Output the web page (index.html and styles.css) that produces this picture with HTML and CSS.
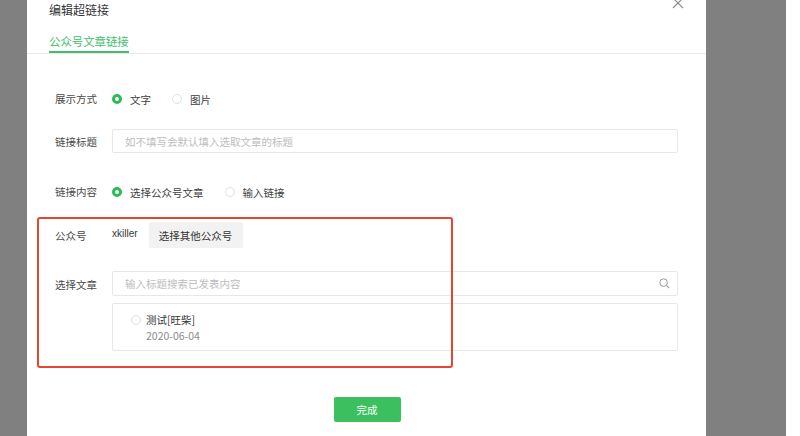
FILE: index.html
```html
<!DOCTYPE html>
<html lang="zh-CN">
<head>
<meta charset="utf-8">
<title>编辑超链接</title>
<link rel="stylesheet" href="styles.css">
</head>
<body>
<div class="screen">
  <div class="mask mask-left"></div>
  <div class="dialog">
    <button class="close" aria-label="关闭">
      <svg width="12" height="12" viewBox="0 0 12 12"><path d="M1 1L11 11M11 1L1 11" stroke="#8a8a8a" stroke-width="1.1" fill="none"/></svg>
    </button>
    <div class="dialog-title">编辑超链接</div>
    <div class="tabs">
      <span class="tab active">公众号文章链接</span>
    </div>
    <div class="form">
      <div class="row row-mode">
        <div class="label">展示方式</div>
        <div class="control radios">
          <label class="radio checked"><i></i>文字</label>
          <label class="radio"><i></i>图片</label>
        </div>
      </div>
      <div class="row row-title">
        <div class="label">链接标题</div>
        <div class="control">
          <div class="input"><span class="placeholder">如不填写会默认填入选取文章的标题</span></div>
        </div>
      </div>
      <div class="row row-content">
        <div class="label">链接内容</div>
        <div class="control radios">
          <label class="radio checked"><i></i>选择公众号文章</label>
          <label class="radio"><i></i>输入链接</label>
        </div>
      </div>
      <div class="row row-account">
        <div class="label">公众号</div>
        <div class="control account">
          <span class="nickname">xkiller</span>
          <button class="btn-default">选择其他公众号</button>
        </div>
      </div>
      <div class="row row-article">
        <div class="label">选择文章</div>
        <div class="control">
          <div class="input search">
            <span class="placeholder">输入标题搜索已发表内容</span>
            <svg class="search-icon" width="11" height="11" viewBox="0 0 11 11"><circle cx="4.6" cy="4.6" r="3.8" stroke="#9a9a9a" stroke-width="1" fill="none"/><path d="M7.4 7.4L10.2 10.2" stroke="#9a9a9a" stroke-width="1.1"/></svg>
          </div>
          <div class="article-list">
            <label class="article">
              <i class="radio-dot"></i>
              <span class="article-info">
                <span class="article-title">测试[旺柴]</span>
                <span class="article-date">2020-06-04</span>
              </span>
            </label>
          </div>
        </div>
      </div>
      <div class="footer">
        <button class="btn-primary">完成</button>
      </div>
    </div>
    <div class="highlight"></div>
  </div>
  <div class="mask mask-right"></div>
  <div class="gutter"></div>
</div>
</body>
</html>
```

FILE: styles.css
```css
* { box-sizing: border-box; }

html, body {
  margin: 0;
  padding: 0;
  height: 100%;
  overflow: hidden;
  background: #ffffff;
}

body {
  font-family: "Noto Sans CJK SC", "Noto Sans", sans-serif;
  font-size: 10.5px;
  color: #3e3e3e;
}

.screen {
  display: flex;
  width: 800px;
  height: 436px;
}

.mask {
  background: #808080;
  height: 100%;
}
.mask-left { width: 27px; }
.mask-right { width: 80px; }
.gutter { width: 14px; background: #ffffff; }

.dialog {
  position: relative;
  width: 679px;
  height: 100%;
  background: #ffffff;
}

.close {
  position: absolute;
  top: -3px;
  right: 22px;
  width: 12px;
  height: 12px;
  padding: 0;
  border: 0;
  background: none;
  display: flex;
}

.dialog-title {
  height: 20px;
  line-height: 20px;
  padding-left: 22px;
  font-size: 12px;
  color: #353535;
}

.tabs {
  margin-top: 11px;
  padding-left: 22px;
  border-bottom: 1px solid #e9e9e9;
  display: flex;
}

.tab {
  line-height: 20px;
  font-size: 11.4px;
  color: #3fbf6c;
  border-bottom: 2px solid #3fbf6c;
}

.form {
  padding: 33px 28px 0;
}

.row {
  display: flex;
  align-items: flex-start;
}

.label {
  width: 57px;
  flex: none;
  line-height: 24px;
  color: #4a4a4a;
}

.control {
  flex: 1;
  min-width: 0;
}

.row-title { margin-top: 18px; }
.row-title .label { padding-top: 1px; }
.row-content { margin-top: 26px; }
.row-account { margin-top: 18px; }
.row-account .label { line-height: 28px; }
.row-article { margin-top: 21px; }
.row-article .label { line-height: 28px; }

.radios {
  display: flex;
  align-items: center;
  height: 24px;
  gap: 21px;
}

.radio {
  display: flex;
  align-items: center;
  gap: 8px;
  color: #3e3e3e;
}

.radio i,
.radio-dot {
  width: 10px;
  height: 10px;
  border-radius: 50%;
  border: 1px solid #e0e0e0;
  background: #ffffff;
  flex: none;
}

.radio.checked i {
  border: 3px solid #2dbb58;
  background: #ffffff;
}

.input {
  height: 24px;
  border: 1px solid #e7e7e7;
  border-radius: 2px;
  padding: 0 12px;
  display: flex;
  align-items: center;
}

.placeholder {
  color: #bdbdbd;
}

.search {
  height: 25px;
  justify-content: space-between;
  padding-right: 7px;
}

.account {
  display: flex;
  align-items: center;
  height: 26px;
  gap: 11px;
}

.nickname {
  font-family: "Liberation Sans", Arial, sans-serif;
  font-size: 10px;
  color: #353535;
  margin-top: -3px;
}

.btn-default {
  width: 94px;
  height: 26px;
  border: 0;
  border-radius: 2px;
  background: #f2f2f2;
  font-family: inherit;
  font-size: 10.5px;
  color: #353535;
  padding: 0;
}

.article-list {
  margin-top: 7px;
  height: 48px;
  border: 1px solid #e7e7e7;
  border-radius: 2px;
  padding: 8px 0 0 18px;
}

.article {
  display: flex;
  align-items: flex-start;
  gap: 5px;
}

.article .radio-dot {
  margin-top: 3px;
}

.article-info {
  display: flex;
  flex-direction: column;
  line-height: 16px;
}

.article-title { color: #353535; }
.article-date { color: #8c8c8c; font-size: 10.5px; }

.footer {
  display: flex;
  justify-content: center;
  margin-top: 46px;
}

.btn-primary {
  width: 67px;
  height: 25px;
  margin-left: 1px;
  border: 0;
  border-radius: 2px;
  background: #3cbf5e;
  color: #ffffff;
  font-family: inherit;
  font-size: 10.5px;
  padding: 0;
}

/* red annotation frame around the account/article block */
.highlight {
  position: absolute;
  left: 10px;
  top: 217px;
  width: 416px;
  height: 151px;
  border: 2px solid #e5452e;
  border-radius: 3px;
  pointer-events: none;
}
```
